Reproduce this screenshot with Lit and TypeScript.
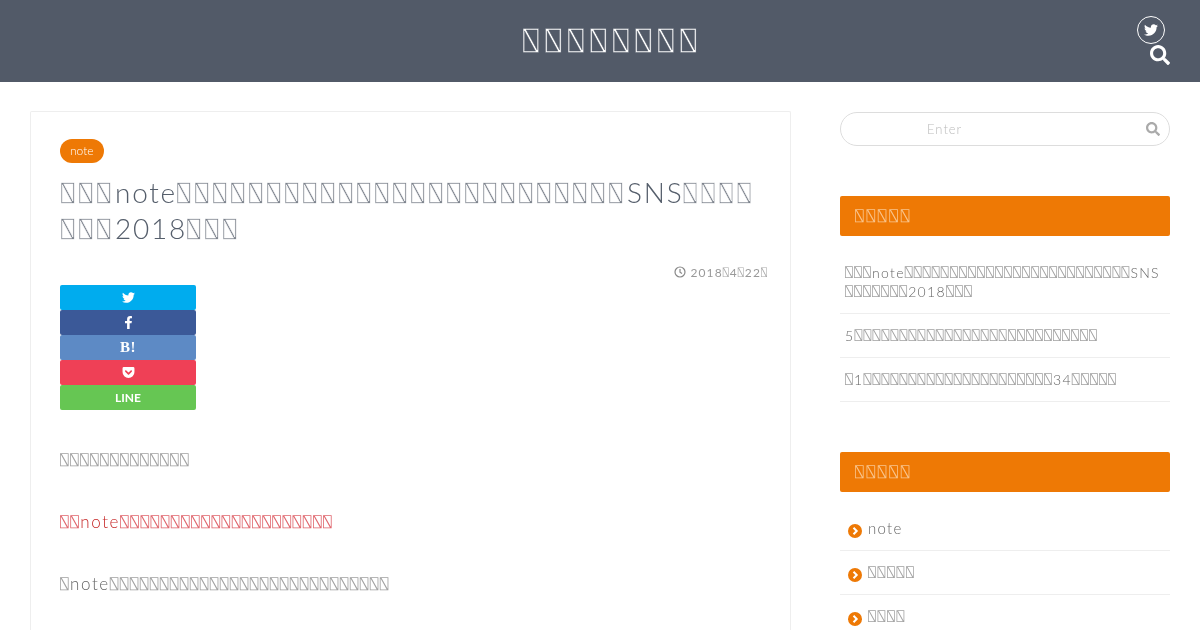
import { LitElement, html, css, svg } from "lit";
import { customElement } from "lit/decorators.js";

const Q = "\u2342";
const q = (n: number) => Q.repeat(n);
/* The reference shows its Japanese text only as empty "missing glyph" boxes, so the box character stands in for each one. */
const t = (s: string) => s.split(/(\u2342+)/).filter(Boolean).map((p) => p[0] === Q ? html`<span class="q">${p}</span>` : p);

const icon = (vb: string, d: string, cls: string) => html`<svg class=${cls} viewBox=${vb} fill="currentColor" aria-hidden="true">${svg`<path d=${d}></path>`}</svg>`;
const TW = "M459.37 151.716c.325 4.548.325 9.097.325 13.645 0 138.72-105.583 298.558-298.558 298.558-59.452 0-114.68-17.219-161.137-47.106 8.447.974 16.568 1.299 25.34 1.299 49.055 0 94.213-16.568 130.274-44.832-46.132-.975-84.792-31.188-98.112-72.772 6.498.974 12.995 1.624 19.818 1.624 9.421 0 18.843-1.3 27.614-3.573-48.081-9.747-84.143-51.98-84.143-102.985v-1.299c13.969 7.797 30.214 12.67 47.431 13.319-28.264-18.843-46.781-51.005-46.781-87.391 0-19.492 5.197-37.36 14.294-52.954 51.655 63.675 129.3 105.258 216.365 109.807-1.624-7.797-2.599-15.918-2.599-24.04 0-57.828 46.782-104.934 104.934-104.934 30.213 0 57.502 12.67 76.67 33.137 23.715-4.548 46.456-13.32 66.599-25.34-7.798 24.366-24.366 44.833-46.132 57.827 21.117-2.273 41.584-8.122 60.426-16.243-14.292 20.791-32.161 39.308-52.628 54.253z";
const FB = "M279.14 288l14.22-92.66h-88.91v-60.13c0-25.35 12.42-50.06 52.24-50.06h40.42V6.26S260.43 0 225.36 0c-73.22 0-121.08 44.38-121.08 124.72v70.62H22.89V288h81.39v224h100.17V288z";
const SEARCH = "M505 442.7L405.3 343c-4.5-4.5-10.6-7-17-7H372c27.6-35.3 44-79.7 44-128C416 93.1 322.9 0 208 0S0 93.1 0 208s93.1 208 208 208c48.3 0 92.7-16.4 128-44v16.3c0 6.4 2.5 12.5 7 17l99.7 99.7c9.4 9.4 24.6 9.4 33.9 0l28.3-28.3c9.4-9.4 9.4-24.6.1-34zM208 336c-70.7 0-128-57.2-128-128 0-70.7 57.2-128 128-128 70.7 0 128 57.2 128 128 0 70.7-57.2 128-128 128z";

const recent = [
  `${q(3)}note${q(25)}SNS\n${q(7)}2018${q(3)}`,
  `5${q(27)}`,
  `${q(1)}1${q(21)}34${q(5)}`,
];
const cats = ["note", q(5), q(4)];

@customElement("app-root")
export class AppRoot extends LitElement {
  static styles = css`
    :host { display: block; height: 630px; overflow: hidden; background: #fff; color: #777;
      font-family: "Lato", "Noto Sans CJK JP", sans-serif; font-weight: 300; }
    .q { font-family: "DejaVu Sans Mono", monospace; font-weight: 400; font-size: var(--q-size); letter-spacing: var(--q-ls);
      color: var(--q-color, #a2a2a2); -webkit-text-stroke: var(--q-stroke-w, 0) var(--q-bg, #fff); vertical-align: .08em; line-height: 1; }

    header { height: 82px; background: #525a68; display: grid; grid-template-columns: 1fr auto 1fr; align-items: start;
      padding: 0 30px 0 56px; box-sizing: border-box; color: #fff; }
    .brand { grid-column: 2; margin: 0; padding-top: 3px; font-size: 26px; font-weight: 400; line-height: 79px; white-space: nowrap; letter-spacing: 0; color: #fff; will-change: transform;
      --q-size: 26px; --q-ls: 6.85px; --q-color: #fff; --q-bg: #525a68; --q-stroke-w: .4px; }
    .hicons { grid-column: 3; display: flex; flex-direction: column; align-items: flex-end; padding-top: 16px; }
    .tw { width: 28px; height: 28px; margin-right: 5px; box-sizing: border-box; border: 1.5px solid #fff; border-radius: 50%;
      display: flex; align-items: center; justify-content: center; }
    .i-tw { width: 14px; height: 14px; }
    .i-s { width: 20px; height: 20px; margin-top: 1px; }

    .wrap { display: flex; gap: 49px; padding: 29px 30px 0; align-items: flex-start; will-change: transform; }
    main { width: 761px; height: 560px; box-sizing: border-box; flex: none; border: 1px solid #eee; border-bottom: 0; border-radius: 2px 2px 0 0;
      padding: 27px 29px 0; }
    .badge { display: inline-block; height: 24px; line-height: 24px; padding: 0 10px; border-radius: 12px; background: #ee7905; color: #fff;
      font-size: 12px; font-weight: 300; }
    h1 { margin: 11px 0 0 1px; font-size: 28px; font-weight: 300; line-height: 36px; letter-spacing: 1.75px; color: #555e6b; white-space: nowrap;
      --q-size: 22px; --q-ls: 4.76px; --q-color: #7c828c; --q-stroke-w: .45px; }
    .date { display: flex; justify-content: flex-end; align-items: center; gap: 4px; margin: 16px -7px 0 0; height: 20px; font-size: 12px; letter-spacing: 1.1px; color: #999; font-weight: 400;
      --q-size: 10px; --q-ls: 1px; --q-color: #aaa; }
    .i-c { width: 12px; height: 12px; color: #888; }
    .share { display: flex; flex-direction: column; width: 136px; margin-top: 3px; }
    .share > div { height: 25px; display: flex; align-items: center; justify-content: center; color: #fff; border-radius: 2px; }
    .b-tw { background: #00acee; } .b-fb { background: #3b5998; } .b-hb { background: #5d8ac5; }
    .b-po { background: #ef4056; } .b-li { background: #66c653; }
    .share .i-a { width: 13px; height: 13px; }
    .hb { font-family: "Liberation Serif", serif; font-weight: 700; font-size: 15px; letter-spacing: .5px; }
    .li { font-size: 12px; font-weight: 700; }
    p { margin: 0; line-height: 24px; font-size: 17px; letter-spacing: 1.6px; color: #666; white-space: nowrap;
      --q-size: 14px; --q-ls: 1.57px; }
    .share + p { margin-top: 38px; }
    p + p { margin-top: 38px; }
    p.red { color: #c62828; --q-color: #e0676e; --q-ls: 1.72px; }

    aside { width: 330px; flex: none; padding-top: 1px; }
    .search { height: 34px; box-sizing: border-box; border: 1px solid #ddd; border-radius: 17px; display: flex; align-items: center; padding: 0 9px 0 86px; }
    .search input { flex: 1; min-width: 0; border: 0; outline: 0; padding: 0; background: none; font: 300 13px "Lato", sans-serif; letter-spacing: 1px; }
    .search input::placeholder { color: #bbb; }
    .i-ss { width: 14px; height: 14px; color: #aaa; }
    h2 { margin: 50px 0 0; height: 40px; line-height: 40px; background: #ee7905; border-radius: 2px; padding-left: 15px; font-size: 16px; font-weight: 400; color: #fff;
      --q-size: 14px; --q-ls: 3px; --q-color: #f9c48c; }
    ul { list-style: none; margin: 15px 0 0; padding: 0; }
    li { padding: 12px 5px; border-bottom: 1px solid #eee; line-height: 19px; font-size: 14px; letter-spacing: 1.3px; color: #666; white-space: pre-line;
      --q-size: 13px; --q-ls: 1.2px; }
    .cats li { display: flex; align-items: center; gap: 6px; padding-left: 8px; font-size: 15px; letter-spacing: 1.3px; --q-ls: 1.67px; }
    .dot { width: 14px; height: 14px; flex: none; margin-top: 4px; }
  `;

  render() {
    return html`
      <header>
        <h1 class="brand">${t(q(8))}</h1>
        <div class="hicons">
          <div class="tw">${icon("0 0 512 512", TW, "i-tw")}</div>
          ${icon("0 0 512 512", SEARCH, "i-s")}
        </div>
      </header>
      <div class="wrap">
        <main>
          <span class="badge">note</span>
          <h1>${t(`${q(3)}note${q(25)}SNS${q(4)}`)}<br />${t(`${q(3)}2018${q(3)}`)}</h1>
          <div class="date">
            <svg class="i-c" viewBox="0 0 24 24" fill="none" stroke="currentColor" stroke-width="2.4" aria-hidden="true"><circle cx="12" cy="12" r="10"></circle><path d="M12 6v6.5l4 2.5"></path></svg>
            <span>${t(`2018${q(1)}4${q(1)}22${q(1)}`)}</span>
          </div>
          <div class="share">
            <div class="b-tw">${icon("0 0 512 512", TW, "i-a")}</div>
            <div class="b-fb">${icon("0 0 320 512", FB, "i-a")}</div>
            <div class="b-hb"><span class="hb">B!</span></div>
            <div class="b-po"><svg class="i-a" viewBox="0 0 24 24" aria-hidden="true"><path fill="currentColor" d="M3.5 2h17A2.5 2.5 0 0 1 23 4.500V11a11 11 0 0 1-22 0V4.500A2.500 2.500 0 0 1 3.500 2z"></path><path d="M7 9.500l5 5 5-5" fill="none" stroke="#ef4056" stroke-width="3" stroke-linecap="round" stroke-linejoin="round"></path></svg></div>
            <div class="b-li"><span class="li">LINE</span></div>
          </div>
          <p>${t(q(13))}</p>
          <p class="red">${t(`${q(2)}note${q(21)}`)}</p>
          <p>${t(`${q(1)}note${q(28)}`)}</p>
        </main>
        <aside>
          <div class="search">
            <input placeholder="Enter" aria-label="Enter" />
            ${icon("0 0 512 512", SEARCH, "i-ss")}
          </div>
          <h2>${t(q(5))}</h2>
          <ul>${recent.map((r) => html`<li>${t(r)}</li>`)}</ul>
          <h2>${t(q(5))}</h2>
          <ul class="cats">
            ${cats.map((c) => html`<li>
              <svg class="dot" viewBox="0 0 14 14" aria-hidden="true"><circle cx="7" cy="7" r="7" fill="#ee7905"></circle><path d="M5.500 3.800L8.700 7l-3.200 3.200" fill="none" stroke="#fff" stroke-width="2"></path></svg>
              <span>${t(c)}</span>
            </li>`)}
          </ul>
        </aside>
      </div>
    `;
  }
}
